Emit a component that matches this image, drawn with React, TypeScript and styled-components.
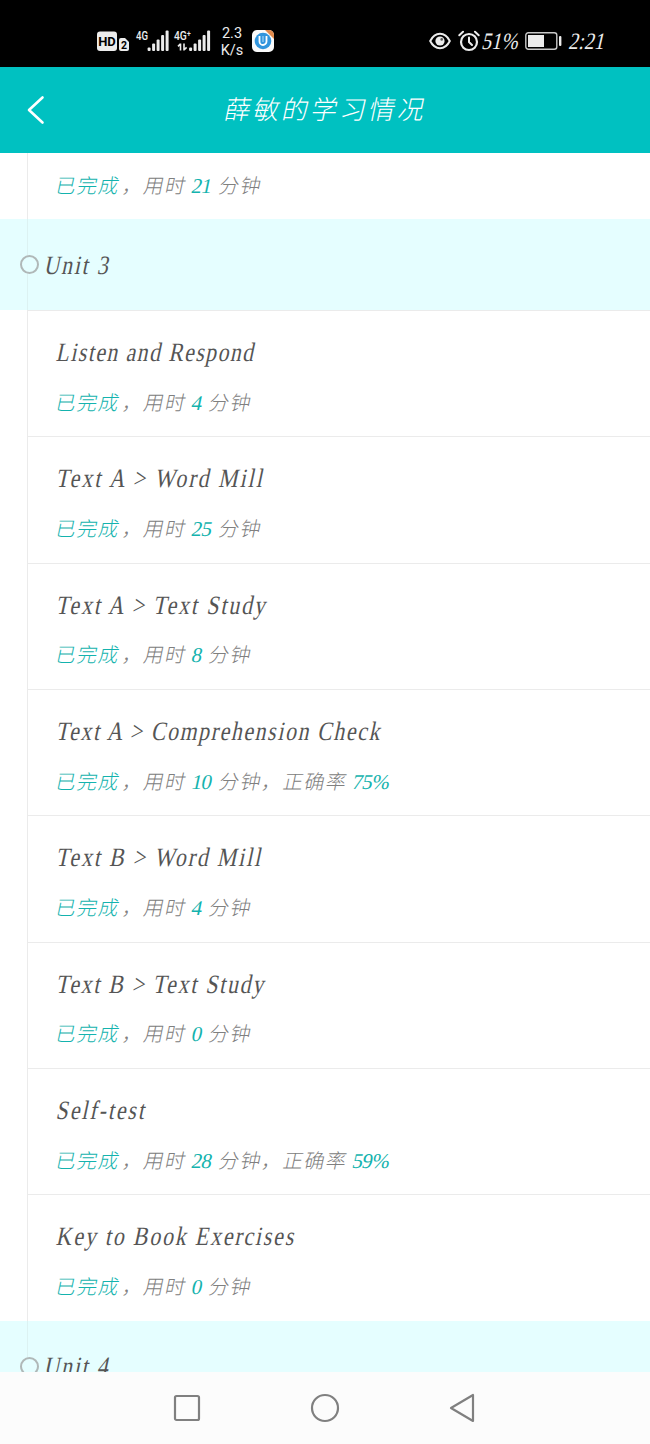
import React from 'react';
import styled, { createGlobalStyle } from 'styled-components';

const GlobalStyle = createGlobalStyle`
  * { box-sizing: border-box; }
  body { margin: 0; background: #fff; }
`;

const Screen = styled.div`
  width: 650px;
  height: 1444px;
  display: flex;
  flex-direction: column;
  overflow: hidden;
  background: #fff;
  font-family: 'Liberation Serif', 'Noto Sans CJK SC', serif;
`;

const StatusBar = styled.header`
  height: 67px;
  flex: none;
  display: flex;
  align-items: flex-start;
  justify-content: space-between;
  padding: 22px 45px 0 96px;
  background: #000;
  color: #ececec;
`;

const StatusGroup = styled.div`
  display: flex;
  align-items: center;
  height: 38px;
`;

const NetSpeed = styled.div`
  width: 26px;
  margin: 2px 7px 0;
  font: 14.5px/17px Roboto, sans-serif;
  text-align: center;
  white-space: nowrap;
`;

const StatusText = styled.span<{ $w: number; $gap?: number }>`
  width: ${p => p.$w}px;
  margin-left: ${p => p.$gap ?? 0}px;
  font-size: 23.5px;
  line-height: 38px;
  letter-spacing: 0.2px;
  white-space: nowrap;
  transform: skewX(-13deg) scaleX(0.84);
  transform-origin: 0 60%;
`;

const TitleBar = styled.div`
  height: 86px;
  flex: none;
  display: grid;
  grid-template-columns: 72px 1fr 72px;
  align-items: center;
  background: #00c1c1;
  color: #fff;
`;

const BackIcon = styled.svg`
  margin-left: 26px;
`;

const PageTitle = styled.h1`
  margin: 0;
  padding: 1px 0 0 2px;
  text-align: center;
  font-weight: 300;
  font-size: 26px;
  line-height: 40px;
  letter-spacing: 2.9px;
  transform: skewX(-12deg);
`;

const Content = styled.main`
  height: 1219px;
  flex: none;
  overflow: hidden;
`;

const UnitBar = styled.section`
  height: 91px;
  display: flex;
  align-items: center;
  background: linear-gradient(#dcf2f2, #dcf2f2) 27px 0 / 1px 100% no-repeat #e5feff;
`;

const UnitMark = styled.i`
  width: 19px;
  height: 19px;
  margin: 0 5px 0 20px;
  border: 2px solid #b0b8b8;
  border-radius: 50%;
  background: #e5feff;
`;

const Slanted = styled.span<{ $ls: number }>`
  display: inline-block;
  transform: skewX(-12deg) scaleX(0.82);
  transform-origin: 0 70%;
  font-size: 26.5px;
  line-height: 36px;
  letter-spacing: ${p => p.$ls}px;
  color: #555;
  white-space: nowrap;
`;

const Item = styled.article<{ $tail?: boolean }>`
  height: ${p => (p.$tail ? 66 : 126.35)}px;
  margin-left: 27px;
  padding: ${p => (p.$tail ? 17 : 23)}px 0 0 27.5px;
  border-left: 1px solid #ebebeb;
  border-top: ${p => (p.$tail ? 0 : 1)}px solid #ebebeb;
`;

const Progress = styled.p<{ $tail?: boolean }>`
  margin: ${p => (p.$tail ? 0 : 16.5)}px 0 0;
  display: flex;
  align-items: baseline;
  font-size: 20px;
  font-weight: 300;
  line-height: 32px;
  letter-spacing: 1.4px;
  color: #808080;
  transform: skewX(-12deg);
  white-space: nowrap;
`;

const Accent = styled.span`
  margin-right: 2.5px;
  color: #14b3ae;
`;

const Figure = styled.span`
  margin: 0 7.5px 0 5px;
  font-size: 21px;
  font-weight: 400;
  letter-spacing: -0.6px;
  color: #14b3ae;
`;

const NavBar = styled.nav`
  height: 72px;
  flex: none;
  display: flex;
  align-items: center;
  justify-content: center;
  gap: 109px;
  background: #fcfcfc;
`;

type Entry = { title: string; ls: number; minutes: number; rate?: string };

const entries: Entry[] = [
  { title: 'Listen and Respond', ls: 1.77, minutes: 4 },
  { title: 'Text A > Word Mill', ls: 2.57, minutes: 25 },
  { title: 'Text A > Text Study', ls: 2.36, minutes: 8 },
  { title: 'Text A > Comprehension Check', ls: 2.03, minutes: 10, rate: '75%' },
  { title: 'Text B > Word Mill', ls: 2.36, minutes: 4 },
  { title: 'Text B > Text Study', ls: 2.17, minutes: 0 },
  { title: 'Self-test', ls: 2.4, minutes: 28, rate: '59%' },
  { title: 'Key to Book Exercises', ls: 2.3, minutes: 0 },
];

const ProgressLine = ({ minutes, rate, tail }: { minutes: number; rate?: string; tail?: boolean }) => (
  <Progress $tail={tail}>
    <Accent>已完成</Accent>，用时
    <Figure>{minutes}</Figure>
    分钟{rate && <>，正确率<Figure>{rate}</Figure></>}
  </Progress>
);

const Unit = ({ name }: { name: string }) => (
  <UnitBar>
    <UnitMark />
    <Slanted $ls={2.2}>{name}</Slanted>
  </UnitBar>
);

const SignalIcons = () => (
  <svg width="116" height="38" viewBox="0 0 116 38" fill="#ececec">
    <rect x="1" y="9.500" width="20" height="19.500" rx="3" />
    <text x="11" y="24" fontFamily="Roboto" fontWeight="700" fontSize="13" textAnchor="middle" fill="#000">HD</text>
    <path d="M23 18a2 2 0 0 1 2-2h4l4 4v7a2 2 0 0 1-2 2h-6a2 2 0 0 1-2-2z" />
    <text x="28" y="27" fontFamily="Roboto" fontWeight="700" fontSize="10.5" textAnchor="middle" fill="#000">2</text>
    <text x="40" y="18" fontFamily="Roboto" fontWeight="500" fontSize="13" textLength="12" lengthAdjust="spacingAndGlyphs">4G</text>
    <text x="78" y="18" fontFamily="Roboto" fontWeight="500" fontSize="13" textLength="17" lengthAdjust="spacingAndGlyphs">4G⁺</text>
    {[0, 41.5].map(x => (
      <g key={x}>
        <rect x={51.6 + x} y="25.500" width="3" height="3.500" rx="1" />
        <rect x={56.1 + x} y="21.500" width="3" height="7.500" rx="1" />
        <rect x={60.6 + x} y="17.500" width="3" height="11.500" rx="1" />
        <rect x={65.1 + x} y="13" width="3" height="16" rx="1" />
        <rect x={69.6 + x} y="8.500" width="3" height="20.500" rx="1" />
      </g>
    ))}
    <path d="M84.500 21.500v7M88 21.500v7M82 24.400l2.500-2.600M88 28l2.600-2.600" fill="none" stroke="#ececec" strokeWidth="1.6" />
  </svg>
);

const AppBadge = () => (
  <svg width="22" height="22" viewBox="0 0 22 22">
    <rect width="22" height="22" rx="5" fill="#fafafa" />
    <path d="M13 0h4a5 5 0 0 1 5 5v4z" fill="#e08a4c" />
    <circle cx="11" cy="11" r="8.3" fill="#3195dd" />
    <path d="M7.5 6v5.500a3.500 3.500 0 0 0 7 0V6" fill="none" stroke="#fff" strokeWidth="1.8" />
    <path d="M11 6v6" stroke="#b9ddf7" strokeWidth="1" />
  </svg>
);

const EyeIcon = () => (
  <svg width="22" height="18" viewBox="0 0 22 18" fill="none" stroke="#ececec" strokeWidth="2">
    <path d="M1.2 9C6-.6 16-.6 20.8 9 16 18.6 6 18.6 1.2 9z" />
    <circle cx="11" cy="9" r="4.6" fill="#ececec" stroke="none" />
    <circle cx="12.7" cy="7.4" r="1.3" fill="#555" stroke="none" />
  </svg>
);

const AlarmIcon = () => (
  <svg width="22" height="22" viewBox="0 0 22 22" fill="none" stroke="#ececec" strokeWidth="2" strokeLinecap="round">
    <circle cx="11" cy="12" r="8" strokeWidth="2.2" />
    <path d="M11 7.500V12l3 3M1.300 5.200 5 1.800M20.700 5.200 17 1.800" />
  </svg>
);

const BatteryIcon = () => (
  <svg width="37" height="18" viewBox="0 0 37 18" fill="#ececec">
    <rect x=".8" y=".8" width="31" height="16.4" rx="2.5" fill="none" stroke="#c8c8c8" strokeWidth="1.4" />
    <rect x="3" y="3" width="16" height="12" />
    <rect x="34" y="4" width="2.4" height="10" rx="1" />
  </svg>
);

const StatusIcons = styled.div`
  display: flex;
  align-items: center;
  gap: 7px;
`;

export default function App() {
  return (
    <Screen>
      <GlobalStyle />
      <StatusBar>
        <StatusGroup>
          <SignalIcons />
          <NetSpeed>2.3<br />K/s</NetSpeed>
          <AppBadge />
        </StatusGroup>
        <StatusGroup>
          <StatusIcons>
            <EyeIcon />
            <AlarmIcon />
          </StatusIcons>
          <StatusText $w={43} $gap={2}>51%</StatusText>
          <BatteryIcon />
          <StatusText $w={36} $gap={7}>2:21</StatusText>
        </StatusGroup>
      </StatusBar>
      <TitleBar>
        <BackIcon width="20" height="30" viewBox="0 0 20 30" fill="none" stroke="#fff" strokeWidth="2.6" strokeLinecap="round" strokeLinejoin="round">
          <path d="M16.500 2.500 3 15l13.500 12.500" />
        </BackIcon>
        <PageTitle>薛敏的学习情况</PageTitle>
      </TitleBar>
      <Content>
        <Item $tail><ProgressLine minutes={21} tail /></Item>
        <Unit name="Unit 3" />
        {entries.map(e => (
          <Item key={e.title}>
            <Slanted $ls={e.ls}>{e.title}</Slanted>
            <ProgressLine minutes={e.minutes} rate={e.rate} />
          </Item>
        ))}
        <Unit name="Unit 4" />
      </Content>
      <NavBar>
        <svg width="28" height="30" viewBox="0 0 28 30" fill="none" stroke="#808080" strokeWidth="2.200">
          <rect x="2" y="3" width="24" height="24" rx="1.500" />
        </svg>
        <svg width="30" height="30" viewBox="0 0 30 30" fill="none" stroke="#808080" strokeWidth="2.200">
          <circle cx="15" cy="15" r="13" />
        </svg>
        <svg width="28" height="30" viewBox="0 0 28 30" fill="none" stroke="#808080" strokeWidth="2.200" strokeLinejoin="round">
          <path d="M24 2v26L2 15z" />
        </svg>
      </NavBar>
    </Screen>
  );
}
